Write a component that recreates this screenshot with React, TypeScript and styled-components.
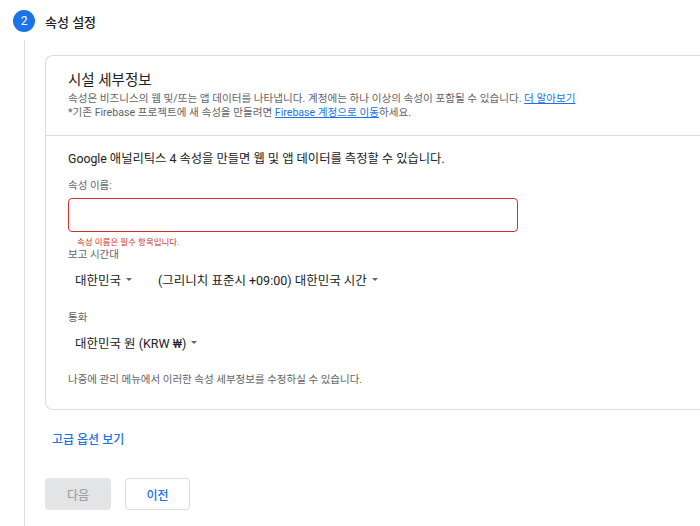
import React from "react";
import styled, { createGlobalStyle } from "styled-components";

const Global = createGlobalStyle`
  html, body { margin: 0; padding: 0; background: #fff; }
  body { font-family: Roboto, "Noto Sans CJK KR", sans-serif; color: #202124; overflow: hidden; }
  * { box-sizing: border-box; }
`;

const Page = styled.div`
  width: 700px;
  height: 526px;
  position: relative;
  overflow: hidden;
`;

const StepHeader = styled.div`
  display: flex;
  align-items: center;
  gap: 10px;
  padding: 10px 0 0 13px;
  height: 32px;
`;

const StepCircle = styled.div`
  width: 22px;
  height: 22px;
  border-radius: 50%;
  background: #1a73e8;
  color: #fff;
  font-size: 12px;
  display: flex;
  align-items: center;
  justify-content: center;
`;

const StepTitle = styled.div`
  font-size: 13px;
  font-weight: 500;
  color: #202124;
`;

const StepBody = styled.div`
  margin-left: 24px;
  margin-top: 8px;
  border-left: 1px solid #dadce0;
  padding: 15px 0 20px 20px;
  height: 500px;
`;

const Card = styled.div`
  border: 1px solid #dadce0;
  border-right: none;
  border-radius: 8px 0 0 8px;
  width: 680px;
`;

const CardHead = styled.div`
  padding: 15px 22px 15px;
  border-bottom: 1px solid #dadce0;
`;

const CardTitle = styled.div`
  font-size: 14.5px;
  color: #202124;
  line-height: 20px;
  margin-bottom: 1px;
`;

const Desc = styled.div`
  font-size: 10.6px;
  color: #5f6368;
  line-height: 14px;
`;

const Link = styled.a`
  color: #1a73e8;
  text-decoration: underline;
`;

const CardBody = styled.div`
  padding: 14px 22px 22px;
`;

const Lead = styled.div`
  font-size: 12.3px;
  color: #202124;
  line-height: 18px;
  margin-bottom: 11px;
`;

const Label = styled.div`
  font-size: 10.5px;
  color: #5f6368;
  line-height: 14px;
`;

const Input = styled.div`
  margin-top: 5px;
  width: 450px;
  height: 34px;
  border: 1px solid #d93025;
  border-radius: 4px;
`;

const ErrorText = styled.div`
  font-size: 8.5px;
  color: #d93025;
  padding-left: 9px;
  margin-top: 5px;
  line-height: 11px;
`;

const SelectRow = styled.div`
  display: flex;
  gap: 26px;
  padding-left: 7px;
  margin-top: 5px;
  height: 24px;
  align-items: center;
`;

const Select = styled.div`
  font-size: 12.5px;
  color: #202124;
  display: flex;
  align-items: center;
  gap: 5px;
`;

const Caret = styled.span`
  width: 0;
  height: 0;
  border-left: 3.5px solid transparent;
  border-right: 3.5px solid transparent;
  border-top: 3.5px solid #5f6368;
  display: inline-block;
  margin-top: 1px;
`;

const Section = styled.div<{ $mt: number }>`
  margin-top: ${(p) => p.$mt}px;
`;

const Note = styled.div`
  font-size: 10.5px;
  color: #5f6368;
  margin-top: 19px;
  line-height: 14px;
`;

const Advanced = styled.div`
  font-size: 12px;
  font-weight: 500;
  color: #1a73e8;
  margin: 22px 0 0 7px;
  line-height: 16px;
`;

const Buttons = styled.div`
  display: flex;
  gap: 14px;
  margin-top: 30px;
`;

const Button = styled.div<{ $disabled?: boolean }>`
  width: ${(p) => (p.$disabled ? 66 : 65)}px;
  height: 32px;
  border-radius: 4px;
  display: flex;
  align-items: center;
  justify-content: center;
  font-size: 12px;
  font-weight: 500;
  background: ${(p) => (p.$disabled ? "#e3e4e5" : "#fff")};
  color: ${(p) => (p.$disabled ? "#a0a3a6" : "#1a73e8")};
  border: ${(p) => (p.$disabled ? "none" : "1px solid #dadce0")};
`;

export default function App() {
  return (
    <Page>
      <Global />
      <StepHeader>
        <StepCircle>2</StepCircle>
        <StepTitle>속성 설정</StepTitle>
      </StepHeader>
      <StepBody>
        <Card>
          <CardHead>
            <CardTitle>시설 세부정보</CardTitle>
            <Desc>
              속성은 비즈니스의 웹 및/또는 앱 데이터를 나타냅니다. 계정에는 하나 이상의 속성이 포함될 수 있습니다.{" "}
              <Link>더 알아보기</Link>
            </Desc>
            <Desc>
              *기존 Firebase 프로젝트에 새 속성을 만들려면 <Link>Firebase 계정으로 이동</Link>하세요.
            </Desc>
          </CardHead>
          <CardBody>
            <Lead>Google 애널리틱스 4 속성을 만들면 웹 및 앱 데이터를 측정할 수 있습니다.</Lead>
            <Label>속성 이름:</Label>
            <Input />
            <ErrorText>속성 이름은 필수 항목입니다.</ErrorText>
            <Section $mt={0}>
              <Label>보고 시간대</Label>
              <SelectRow>
                <Select>
                  대한민국 <Caret />
                </Select>
                <Select>
                  (그리니치 표준시 +09:00) 대한민국 시간 <Caret />
                </Select>
              </SelectRow>
            </Section>
            <Section $mt={20}>
              <Label>통화</Label>
              <SelectRow>
                <Select>
                  대한민국 원 (KRW ₩) <Caret />
                </Select>
              </SelectRow>
            </Section>
            <Note>나중에 관리 메뉴에서 이러한 속성 세부정보를 수정하실 수 있습니다.</Note>
          </CardBody>
        </Card>
        <Advanced>고급 옵션 보기</Advanced>
        <Buttons>
          <Button $disabled>다음</Button>
          <Button>이전</Button>
        </Buttons>
      </StepBody>
    </Page>
  );
}
